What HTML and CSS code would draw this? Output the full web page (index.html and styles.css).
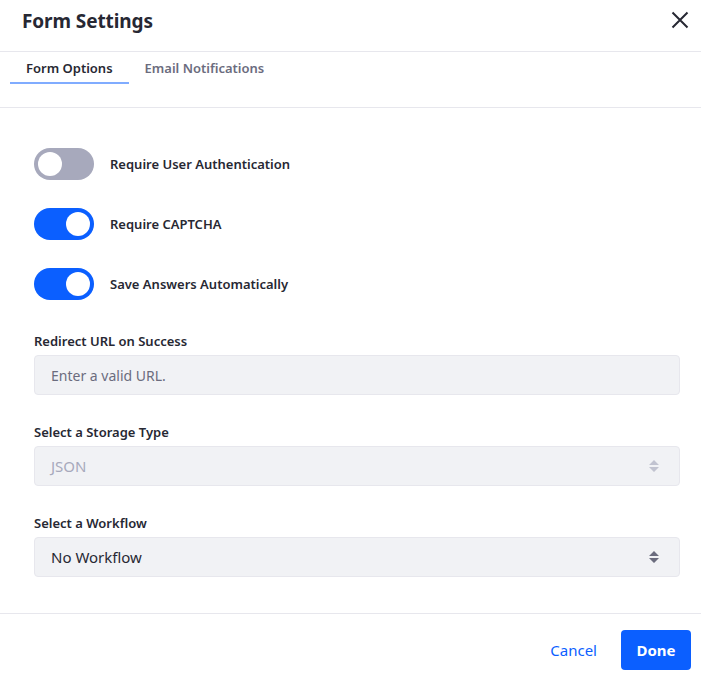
FILE: index.html
```html
<!DOCTYPE html>
<html lang="en">
<head>
<meta charset="utf-8">
<title>Form Settings</title>
<link rel="stylesheet" href="styles.css">
</head>
<body>
<div class="modal">
  <header class="modal-header">
    <h1 class="modal-title">Form Settings</h1>
    <button class="close" aria-label="Close">
      <svg width="18" height="18" viewBox="0 0 18 18"><path d="M1.5 1.5 L16.5 16.5 M16.5 1.5 L1.5 16.5" stroke="#272833" stroke-width="2" fill="none"/></svg>
    </button>
  </header>
  <nav class="tabs">
    <a class="tab active">Form Options</a>
    <a class="tab">Email Notifications</a>
  </nav>
  <main class="modal-body">
    <div class="toggles">
      <div class="toggle-row">
        <span class="switch"><span class="knob"></span></span>
        <span class="toggle-label">Require User Authentication</span>
      </div>
      <div class="toggle-row">
        <span class="switch on"><span class="knob"></span></span>
        <span class="toggle-label">Require CAPTCHA</span>
      </div>
      <div class="toggle-row">
        <span class="switch on"><span class="knob"></span></span>
        <span class="toggle-label">Save Answers Automatically</span>
      </div>
    </div>
    <div class="fields">
      <div class="field">
        <label class="field-label">Redirect URL on Success</label>
        <div class="input placeholder">Enter a valid URL.</div>
      </div>
      <div class="field">
        <label class="field-label">Select a Storage Type</label>
        <div class="input select disabled">JSON
          <svg class="arrows" width="12" height="14" viewBox="0 0 12 14"><path d="M6 1 L11 6 H1 Z M6 13 L11 8 H1 Z" fill="#c1c3d0"/></svg>
        </div>
      </div>
      <div class="field">
        <label class="field-label">Select a Workflow</label>
        <div class="input select">No Workflow
          <svg class="arrows" width="12" height="14" viewBox="0 0 12 14"><path d="M6 1 L11 6 H1 Z M6 13 L11 8 H1 Z" fill="#6b6c7e"/></svg>
        </div>
      </div>
    </div>
  </main>
  <footer class="modal-footer">
    <button class="btn-link">Cancel</button>
    <button class="btn-primary">Done</button>
  </footer>
</div>
</body>
</html>
```

FILE: styles.css
```css
* { box-sizing: border-box; }
html, body { margin: 0; padding: 0; background: #fff; }
body {
  font-family: "Noto Sans", "Open Sans", sans-serif;
  color: #272833;
  width: 701px;
  height: 678px;
  overflow: hidden;
}
.modal { display: flex; flex-direction: column; height: 678px; }
.modal-header {
  height: 52px;
  border-bottom: 1px solid #e7e7ed;
  display: flex;
  align-items: center;
  justify-content: space-between;
  padding: 0 12px 0 22px;
}
.modal-title { margin: 0; font-size: 19px; font-weight: 700; letter-spacing: -0.1px; padding-bottom: 10px; }
.close { background: none; border: 0; padding: 0; margin-bottom: 12px; width: 18px; height: 18px; display: flex; }
.tabs {
  height: 56px;
  border-bottom: 1px solid #e7e7ed;
  display: flex;
  align-items: flex-start;
  padding: 0 10px;
}
.tab {
  font-size: 13px;
  font-weight: 600;
  color: #6b6c7e;
  height: 32px;
  padding: 7px 16px 0;
  white-space: nowrap;
}
.tab.active { color: #272833; border-bottom: 2px solid #80acff; }
.modal-body { flex: 1; padding: 40px 21px 0 34px; display: flex; flex-direction: column; gap: 31px; }
.toggles { display: flex; flex-direction: column; gap: 28px; }
.toggle-row { display: flex; align-items: center; gap: 16px; height: 32px; }
.switch {
  width: 60px; height: 32px; border-radius: 16px; background: #a7a9bc;
  position: relative; flex: none;
}
.switch .knob {
  position: absolute; top: 4px; left: 4px; width: 24px; height: 24px;
  border-radius: 50%; background: #fff;
}
.switch.on { background: #0b5fff; }
.switch.on .knob { left: 32px; }
.toggle-label { font-size: 13px; font-weight: 600; color: #272833; }
.fields { display: flex; flex-direction: column; gap: 27px; }
.field-label { display: block; font-size: 13px; font-weight: 600; margin-bottom: 4px; line-height: 20px; }
.input {
  height: 40px; background: #f1f2f5; border: 1px solid #e7e7ed; border-radius: 4px;
  padding: 0 16px; display: flex; align-items: center; font-size: 15px; color: #272833;
}
.input.placeholder { color: #6b6c7e; font-size: 14px; }
.input.disabled { color: #a7a9bc; }
.select { justify-content: space-between; }
.arrows { margin-right: 3px; }
.modal-footer {
  height: 65px;
  border-top: 1px solid #e7e7ed;
  display: flex; justify-content: flex-end; align-items: flex-start;
  padding: 16px 10px 0 0;
  gap: 24px;
}
.btn-link { background: none; border: 0; color: #0b5fff; font-family: inherit; font-size: 15px; height: 40px; padding: 0; }
.btn-primary {
  background: #0b5fff; color: #fff; border: 0; border-radius: 4px;
  font-family: inherit; font-size: 15px; font-weight: 700; height: 40px; width: 70px;
}
```
